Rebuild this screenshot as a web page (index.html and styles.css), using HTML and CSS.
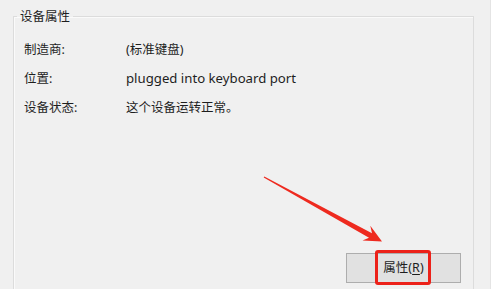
FILE: index.html
```html
<!DOCTYPE html>
<html>
<head>
<meta charset="utf-8">
<title>设备属性</title>
<link rel="stylesheet" href="styles.css">
</head>
<body>
  <div id="app">
    <fieldset class="group">
      <legend>设备属性</legend>
      <ul class="prop-list">
        <li><span class="label">制造商:</span><span class="value">(标准键盘)</span></li>
        <li><span class="label">位置:</span><span class="value latin">plugged into keyboard port</span></li>
        <li><span class="label">设备状态:</span><span class="value">这个设备运转正常。</span></li>
      </ul>
      <div class="actions">
        <div class="btn">属性(<u>R</u>)</div>
        <div class="mark"></div>
      </div>
    </fieldset>
    <svg class="arrow" width="491" height="289" viewBox="0 0 491 289">
      <polygon points="264.3,176.5 372,233.2 370.3,225.8 382,241.5 362.5,240.6 369,237.8 263.7,177.5" fill="#ee2a1f"/>
    </svg>
  </div>
</body>
</html>
```

FILE: styles.css
```css
* {
  padding: 0;
  margin: 0;
}

html, body {
  overflow: hidden;
  background: #f0f0f0;
}

#app {
  position: relative;
  width: 491px;
  height: 289px;
  font-family: "Noto Sans", "Noto Sans CJK SC", sans-serif;
  font-size: 12.5px;
  color: #1e1e1e;
  border-right: 1px solid #e4e4e4;
  box-sizing: border-box;
  overflow: hidden;
}

.group {
  margin: 8px 16px 0 13px;
  padding: 0 0 0 3px;
  height: 320px;
  border: 1px solid #dcdcdc;
  box-shadow: inset 1px 1px #fafafa;
}

.group legend {
  padding: 0 3px;
  line-height: 17px;
}

.prop-list {
  list-style-type: none;
  padding: 16px 0 0 7px;
}

.prop-list li {
  display: flex;
  height: 17px;
  line-height: 17px;
  margin-bottom: 12px;
}

.prop-list .label {
  width: 102px;
}

.prop-list .latin {
  font-size: 13.2px;
}

.actions {
  position: relative;
  display: flex;
  justify-content: flex-end;
  margin-top: 137px;
  padding-right: 12px;
}

.btn {
  width: 113px;
  height: 28px;
  line-height: 28px;
  text-align: center;
  background: #e1e1e1;
  border: 1px solid #adadad;
}

.btn u {
  text-underline-offset: 2px;
}

.mark {
  position: absolute;
  left: 358px;
  top: -3px;
  width: 50px;
  height: 29px;
  border: 3px solid #ec2119;
  border-radius: 3px;
}

.arrow {
  position: absolute;
  left: 0;
  top: 0;
}
```
